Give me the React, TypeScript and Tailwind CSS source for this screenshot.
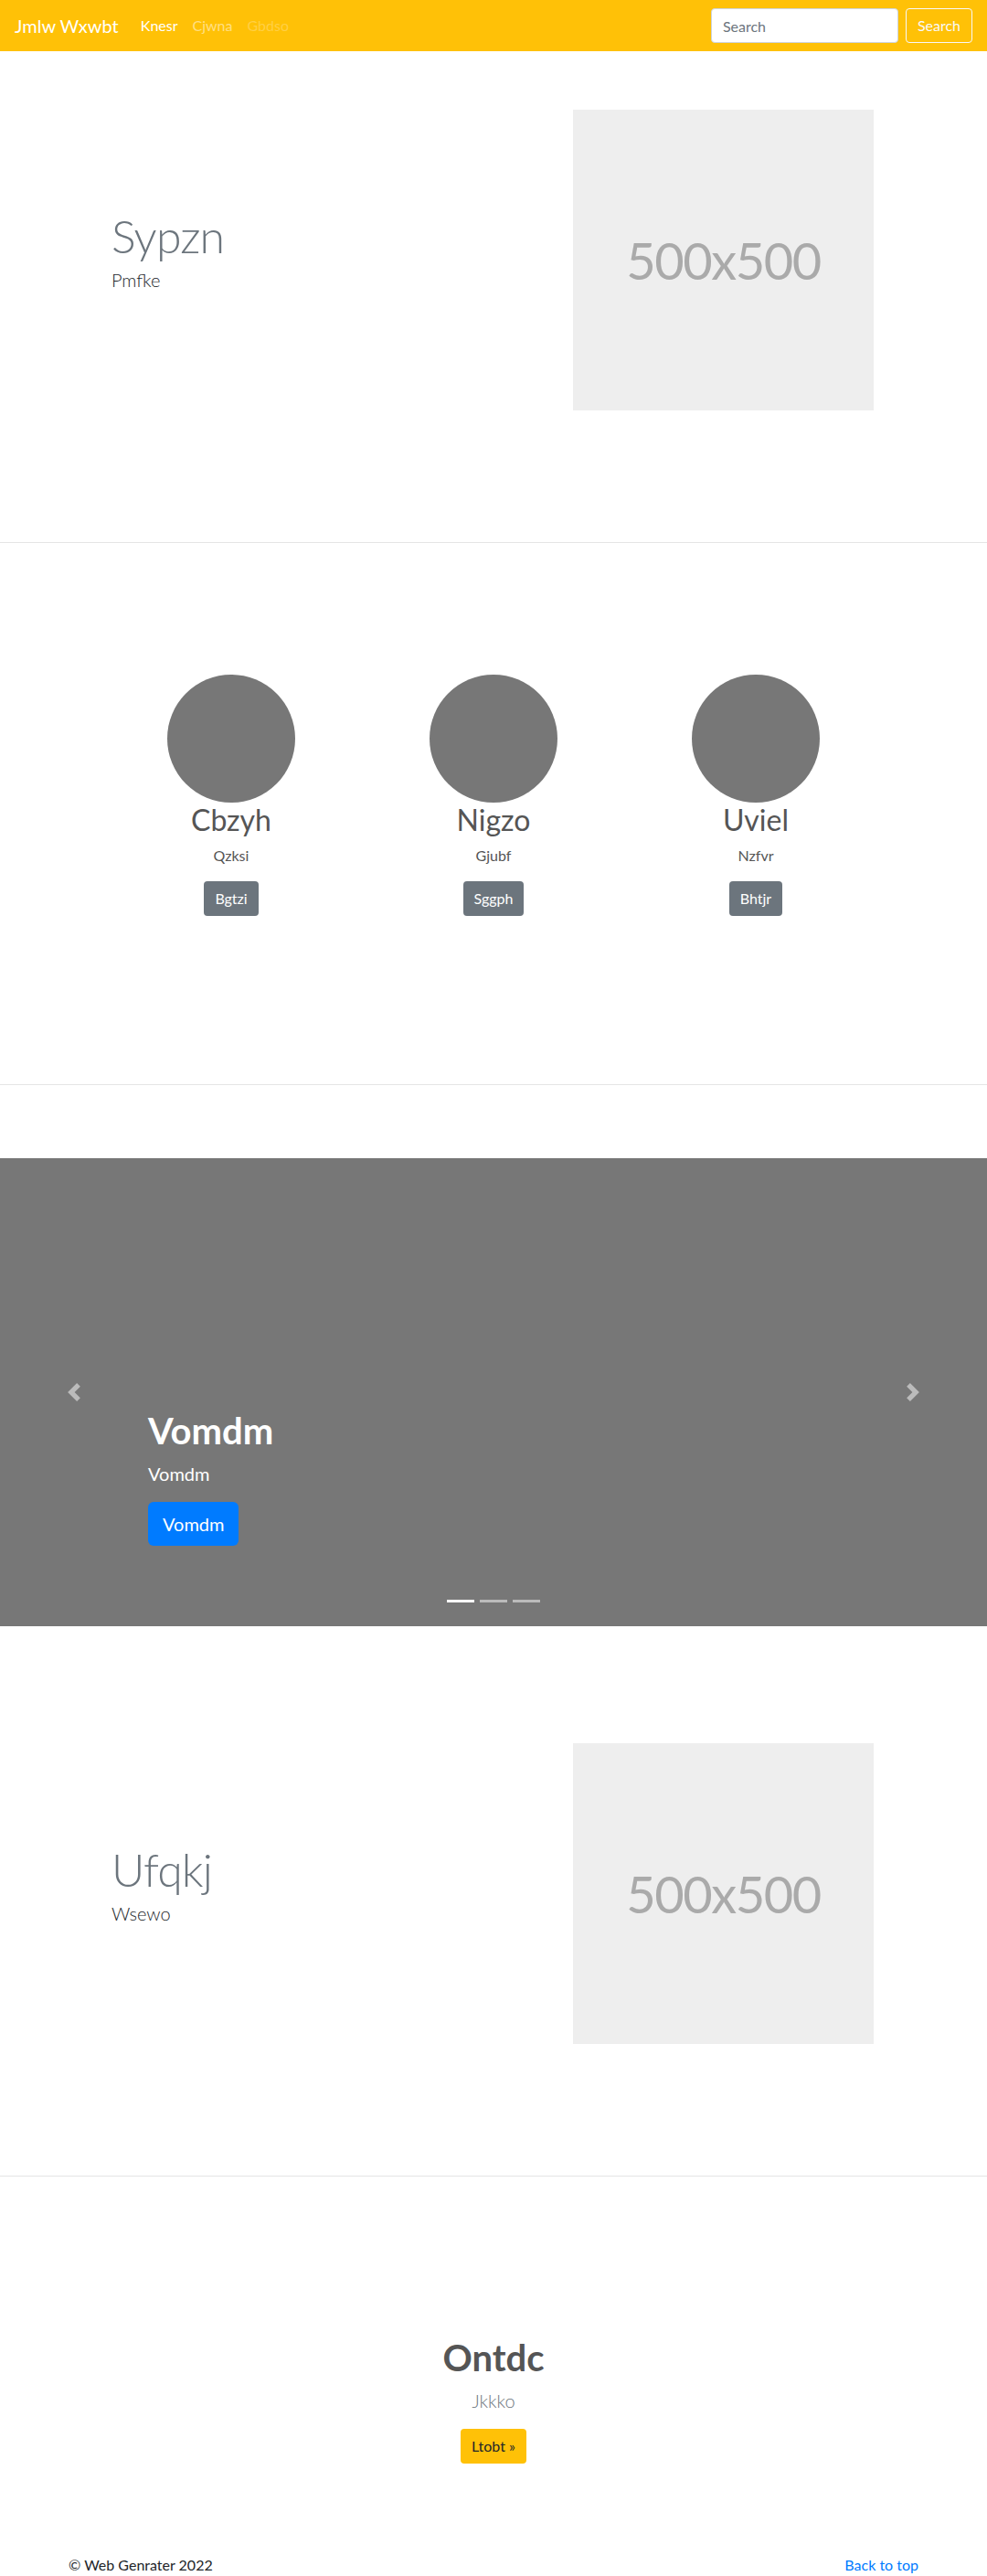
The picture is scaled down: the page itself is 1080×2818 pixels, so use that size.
import React from "react";

const font = { fontFamily: "Lato, 'Open Sans', 'Liberation Sans', sans-serif" };

function Placeholder() {
  return (
    <div className="flex h-[329px] w-[329px] items-center justify-center bg-[#eeeeee]">
      <span className="text-[56px] leading-none tracking-[-1.5px] text-[#aaaaaa]">500x500</span>
    </div>
  );
}

function Featurette({ title, lead, top }: { title: string; lead: string; top: string }) {
  return (
    <section className={`${top} pb-16`}>
      <div className="mx-auto flex w-[960px] items-center">
        <div className="flex-1 pl-[62px]">
          <h2 className="mb-2 text-[50px] font-light leading-none tracking-[-0.8px] text-[#6c757d]">{title}</h2>
          <p className="mb-4 text-[20px] font-light leading-[30px] text-[#212529]">{lead}</p>
        </div>
        <div className="mr-[64px]">
          <Placeholder />
        </div>
      </div>
    </section>
  );
}

function Divider() {
  return <hr className="my-20 border-0 border-t border-[rgba(0,0,0,0.1)]" />;
}

const people = [
  { name: "Cbzyh", sub: "Qzksi", btn: "Bgtzi" },
  { name: "Nigzo", sub: "Gjubf", btn: "Sggph" },
  { name: "Uviel", sub: "Nzfvr", btn: "Bhtjr" },
];

export default function App() {
  return (
    <div style={font} className="min-h-[2818px] bg-white text-[16px] text-[#212529]">
      <nav className="flex h-14 items-center bg-[#ffc107] px-4">
        <span className="mr-4 text-[20px] leading-[30px] text-white">Jmlw Wxwbt</span>
        <ul className="flex">
          <li className="px-2 text-white">Knesr</li>
          <li className="px-2 text-[rgba(255,255,255,0.5)]">Cjwna</li>
          <li className="px-2 text-[rgba(255,255,255,0.25)]">Gbdso</li>
        </ul>
        <form className="ml-auto flex items-center gap-2" onSubmit={(e) => e.preventDefault()}>
          <input
            type="text"
            placeholder="Search"
            className="h-[38px] w-[205px] rounded border border-[#ced4da] bg-white px-3 text-[16px] text-[#495057] outline-none placeholder:text-[#6c757d]"
          />
          <button className="h-[38px] rounded border border-[#f8f9fa] px-3 text-[16px] text-[#f8f9fa]">Search</button>
        </form>
      </nav>

      <Featurette title="Sypzn" lead="Pmfke" top="pt-16" />
      <Divider />

      <section className="pb-16 pt-16">
        <div className="mx-auto grid w-[861px] grid-cols-3">
          {people.map((p) => (
            <div key={p.name} className="mb-6 flex flex-col items-center text-center">
              <div className="h-[140px] w-[140px] rounded-full bg-[#777777]" />
              <h2 className="mb-2 text-[32px] font-normal leading-[38px] text-[#555555]">{p.name}</h2>
              <p className="mx-3 mb-4 leading-6 text-[#555555]">{p.sub}</p>
              <button className="mb-4 h-[38px] rounded bg-[#6c757d] px-3 text-white">{p.btn}</button>
            </div>
          ))}
        </div>
      </section>
      <Divider />

      <div className="relative h-[512px] bg-[#777777]">
        <div className="absolute inset-y-0 left-0 flex w-[15%] items-center justify-center opacity-50">
          <svg width="20" height="20" viewBox="0 0 8 8" fill="#fff">
            <path d="M5.25 0l-4 4 4 4 1.5-1.5L4.25 4l2.5-2.5L5.25 0z" />
          </svg>
        </div>
        <div className="absolute inset-y-0 right-0 flex w-[15%] items-center justify-center opacity-50">
          <svg width="20" height="20" viewBox="0 0 8 8" fill="#fff">
            <path d="M2.75 0l-1.5 1.5L3.75 4l-2.5 2.5L2.75 8l4-4-4-4z" />
          </svg>
        </div>
        <div className="absolute bottom-[52px] left-[15%] right-[15%] py-5 text-left text-white">
          <h1 className="mb-2 text-[40px] font-bold leading-[48px]">Vomdm</h1>
          <p className="mb-4 text-[20px] leading-[30px]">Vomdm</p>
          <p className="mb-4">
            <button className="h-12 rounded-md bg-[#007bff] px-4 text-[20px] text-white">Vomdm</button>
          </p>
        </div>
        <div className="absolute bottom-4 left-0 right-0 flex justify-center gap-[6px]">
          <span className="my-[10px] h-[3px] w-[30px] bg-white" />
          <span className="my-[10px] h-[3px] w-[30px] bg-white opacity-50" />
          <span className="my-[10px] h-[3px] w-[30px] bg-white opacity-50" />
        </div>
      </div>

      <Featurette title="Ufqkj" lead="Wsewo" top="pt-32" />
      <Divider />

      <section className="pt-[94px] text-center">
        <h1 className="mb-2 text-[40px] font-bold leading-[48px] text-[#555555]">Ontdc</h1>
        <p className="mb-4 text-[20px] font-light leading-[30px] text-[#6c757d]">Jkkko</p>
        <button className="h-[38px] rounded bg-[#ffc107] px-3 text-[#212529]">Ltobt »</button>
      </section>

      <footer className="mx-auto mt-[99px] flex w-[960px] justify-between px-[15px] leading-6">
        <p>© Web Genrater 2022</p>
        <a href="#" className="text-[#007bff]">Back to top</a>
      </footer>
    </div>
  );
}
